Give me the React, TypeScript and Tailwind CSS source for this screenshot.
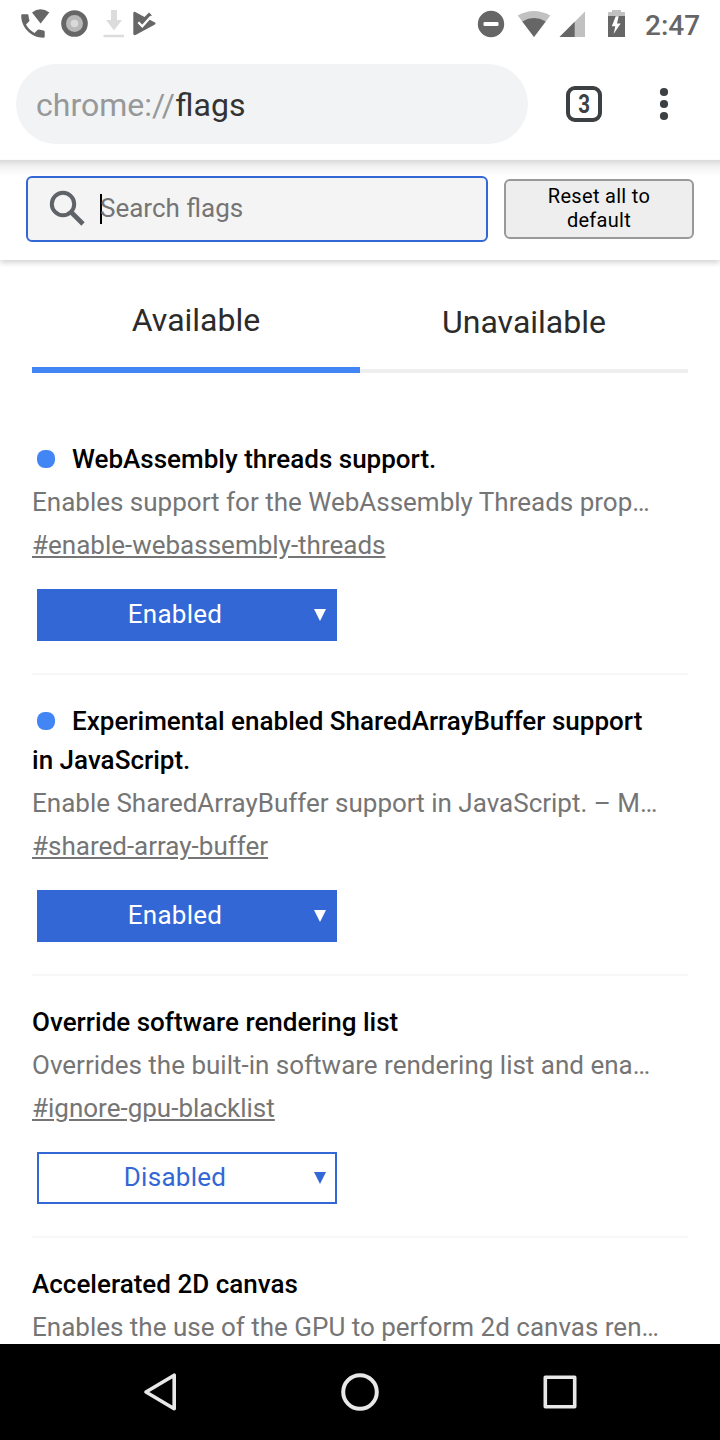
import React from "react";

type Flag = {
  title: string;
  description: string;
  id?: string;
  value?: "Enabled" | "Disabled";
  modified: boolean;
};

const flags: Flag[] = [
  {
    title: "WebAssembly threads support.",
    description: "Enables support for the WebAssembly Threads prop…",
    id: "#enable-webassembly-threads",
    value: "Enabled",
    modified: true,
  },
  {
    title: "Experimental enabled SharedArrayBuffer support in JavaScript.",
    description: "Enable SharedArrayBuffer support in JavaScript. – M…",
    id: "#shared-array-buffer",
    value: "Enabled",
    modified: true,
  },
  {
    title: "Override software rendering list",
    description: "Overrides the built-in software rendering list and ena…",
    id: "#ignore-gpu-blacklist",
    value: "Disabled",
    modified: false,
  },
  {
    title: "Accelerated 2D canvas",
    description: "Enables the use of the GPU to perform 2d canvas ren…",
    modified: false,
  },
];

function StatusBar() {
  return (
    <div className="flex h-12 shrink-0 items-start justify-between text-[#666666]">
      <svg className="h-12 w-[180px]" viewBox="0 0 180 48" fill="currentColor">
        <path d="M32 12.6Q40.5 6 49.3 12.6L40.6 23.5Z" />
        <path d="M22.4 14.2H27.3Q28.4 14.2 28.5 15.4Q28.7 17.8 29.4 20Q29.6 20.9 29 21.5L26 24.6Q29 30.300 34.500 33L37.500 29.900Q38.200 29.300 39 29.600Q41.200 30.300 43.500 30.400Q44.700 30.600 44.700 31.700V36.500Q44.700 37.700 43.500 37.700C31 37.700 21.200 27.500 21.200 15.500Q21.200 14.200 22.400 14.200Z" />
        <circle cx="74.500" cy="23.500" r="13.300" />
        <circle cx="74.500" cy="23.500" r="8.500" fill="#b9b9b9" />
        <circle cx="74.500" cy="23.500" r="3.800" fill="#dadada" />
        <path fill="#dcdcdc" d="M111 10h6v10h5l-8 10.500l-8-10.500h5zM103.500 34.700h20.500v2.500h-20.500z" />
        <path d="M133.300 13.200Q133.300 11 135.300 12L144.500 17L149 12.500L151.800 15.300L148.700 19.200L154.500 22.300Q156.700 23.500 154.500 24.800L136 34.700Q133.300 36 133.300 33.500Z" />
        <path d="M138.300 22.300L142.300 26.300L151 16.500" fill="none" stroke="white" strokeWidth="2.200" />
      </svg>
      <div className="flex">
        <svg className="h-12 w-[165px]" viewBox="475 0 165 48" fill="currentColor">
          <circle cx="491" cy="24" r="13.200" />
          <rect x="483.500" y="22" width="15" height="4" rx="1" fill="white" />
          <path d="M517.700 15.500Q534 6.500 550.300 15.500L534 37Z" fill="#c1c1c1" />
          <path d="M522.300 21.400Q534 14.600 545.700 21.400L534 37Z" />
          <path d="M585 11.500V37H559.500Z" fill="#c1c1c1" />
          <path d="M574.700 21.800V37H559.500Z" />
          <path d="M608 16.500V13Q608 12 609 12H612V10H621V12H624Q625 12 625 13V16.500Z" fill="#c1c1c1" />
          <path d="M608 16H625V37H608Z" />
          <path d="M615.700 16.300L611.800 26.300H615.300L613.600 34L620.700 23.500H617L618.700 16.300Z" fill="white" />
        </svg>
        <span className="w-20 pl-[5px] pt-2 text-[28px] leading-9 font-medium">2:47</span>
      </div>
    </div>
  );
}

function Toolbar() {
  return (
    <div className="flex h-28 shrink-0 items-start pt-4">
      <div className="ml-4 flex h-20 w-lg items-center rounded-full bg-[#f1f3f4] pl-5 text-[32px] text-[#969899]">
        <span className="pt-0.5">
          chrome://<span className="ml-[0.5px] text-[#333333]">flags</span>
        </span>
      </div>
      <div className="mt-[22px] ml-[38px] flex size-9 items-center justify-center rounded-[9px] border-4 border-[#3c4043] text-[25px] leading-none font-bold text-[#3c4043]">
        <span className="scale-x-82">3</span>
      </div>
      <svg className="mt-5 ml-[54px] h-10 w-4" viewBox="0 0 16 40" fill="#3c4043">
        <circle cx="8" cy="8" r="4.100" />
        <circle cx="8" cy="20" r="4.100" />
        <circle cx="8" cy="32" r="4.100" />
      </svg>
    </div>
  );
}

function SearchBar() {
  return (
    <div className="flex h-[100px] shrink-0 items-start bg-linear-to-b from-[#d9d9d9] via-[#f1f1f1] via-[6px] to-white to-[16px] pt-4 shadow-[0_3px_5px_rgba(0,0,0,0.16)]">
      <div className="ml-[26px] flex h-[66px] w-[462px] items-center rounded-[6px] border-2 border-[#3367d6] bg-[#f4f4f4]">
        <svg className="ml-[21px] size-[38px]" viewBox="0 0 38 38" fill="none" stroke="#5f6368">
          <circle cx="14" cy="14" r="11.200" strokeWidth="4" />
          <path d="M22.500 22.500L34 34" strokeWidth="4.600" />
        </svg>
        <span className="ml-[13px] h-[30px] w-0.5 bg-black" />
        <span className="-ml-0.5 pb-0.5 text-[26px] text-[#757575]">Search flags</span>
      </div>
      <button className="mt-[3px] ml-4 h-[60px] w-[190px] rounded-[6px] border-2 border-[#999999] bg-[#eeeeee] px-6 pb-0.5 text-[20px] leading-6 tracking-[0.3px] text-black">
        Reset all to default
      </button>
    </div>
  );
}

function Tabs() {
  return (
    <div className="mx-8 mt-[27px] flex h-[86px] shrink-0 items-stretch text-center text-[32px] leading-[66px] text-[#2b2b2b]">
      <div className="flex-1 border-b-[6px] border-[#4285f4]">Available</div>
      <div className="flex-1 border-b-4 border-[#eeeeee] pt-0.5">Unavailable</div>
    </div>
  );
}

function FlagRow({ flag }: { flag: Flag }) {
  const enabled = flag.value === "Enabled";
  return (
    <div className="mb-[27px] flex flex-col border-b-2 border-[#f7f7f7] pb-8 text-[26px] leading-[39px] text-[#757575]">
      <h2 className="pr-6 font-medium tracking-[0.01px] text-black">
        {flag.modified && (
          <span className="mr-[17px] ml-[5px] inline-block size-[18px] rounded-[8px] bg-[#4285f4]" />
        )}
        {flag.title}
      </h2>
      <p className="mt-1 whitespace-nowrap">{flag.description}</p>
      {flag.id && <a className="mt-1 self-start underline">{flag.id}</a>}
      {flag.value && (
        <div
          className={
            enabled
              ? "mt-6 ml-[5px] flex h-[52px] w-[300px] items-center border-2 border-[#3367d6] bg-[#3367d6] tracking-[0.26px] text-white"
              : "mt-6 ml-[5px] flex h-[52px] w-[300px] items-center border-2 border-[#3367d6] bg-white tracking-[0.26px] text-[#3367d6]"
          }
        >
          <span className="flex-1 pr-[3px] pb-0.5 text-center">{flag.value}</span>
          <svg className="mr-[9px] size-3" viewBox="0 0 12 12" fill="currentColor">
            <path d="M0 0H12L6 12Z" />
          </svg>
        </div>
      )}
    </div>
  );
}

function NavBar() {
  return (
    <div className="flex h-24 shrink-0 items-center justify-center gap-40 bg-black">
      <svg className="size-10" viewBox="0 0 40 40" fill="none" stroke="#e8e8e8" strokeWidth="3.600" strokeLinejoin="round">
        <path d="M6 20L34.200 3.200V36.800Z" />
      </svg>
      <svg className="size-10" viewBox="0 0 40 40" fill="none" stroke="#e8e8e8" strokeWidth="4">
        <circle cx="20" cy="20" r="16.800" />
      </svg>
      <svg className="size-10" viewBox="0 0 40 40" fill="none" stroke="#e8e8e8" strokeWidth="3.600" strokeLinejoin="round">
        <path d="M5.300 5.300H34.700V34.700H5.300Z" />
      </svg>
    </div>
  );
}

export default function App() {
  return (
    <div className="flex h-[1440px] w-[720px] flex-col overflow-hidden bg-white font-[Roboto,sans-serif]">
      <StatusBar />
      <Toolbar />
      <SearchBar />
      <main className="min-h-0 flex-1 overflow-hidden">
        <Tabs />
        <div className="mx-8 mt-[67px]">
          {flags.map((flag) => (
            <FlagRow key={flag.title} flag={flag} />
          ))}
        </div>
      </main>
      <NavBar />
    </div>
  );
}
